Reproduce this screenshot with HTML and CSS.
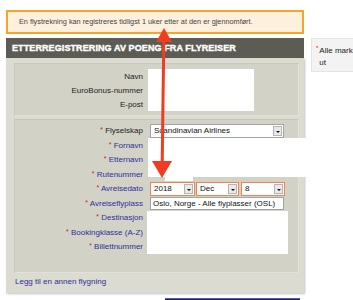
FILE: index.html
```html
<!DOCTYPE html>
<html lang="no">
<head>
<meta charset="utf-8">
<title>Etterregistrering</title>
<link rel="stylesheet" href="styles.css">
</head>
<body>
<div class="page">
  <div class="main">
    <div class="notice">En flystrekning kan registreres tidligst 1 uker etter at den er gjennomført.</div>
    <div class="header">ETTERREGISTRERING AV POENG FRA FLYREISER</div>
    <div class="panel">
      <div class="section sec1">
        <div class="labels">
          <div class="lbl">Navn</div>
          <div class="lbl">EuroBonus-nummer</div>
          <div class="lbl">E-post</div>
        </div>
        <div class="whitebox wb1"></div>
      </div>
      <div class="section sec2">
        <div class="lbl r1 dark"><span class="req">*</span> Flyselskap</div>
        <div class="lbl r2"><span class="req">*</span> Fornavn</div>
        <div class="lbl r3"><span class="req">*</span> Etternavn</div>
        <div class="lbl r4"><span class="req">*</span> Rutenummer</div>
        <div class="lbl r5"><span class="req">*</span> Avreisedato</div>
        <div class="lbl r6"><span class="req">*</span> Avreiseflyplass</div>
        <div class="lbl r7"><span class="req">*</span> Destinasjon</div>
        <div class="lbl r8"><span class="req">*</span> Bookingklasse (A-Z)</div>
        <div class="lbl r9"><span class="req">*</span> Billettnummer</div>

        <div class="select airline f1"><span class="val">Scandinavian Airlines</span><span class="btn"></span></div>
        <div class="whitebox wb2 f2"><span class="tab"></span></div>
        <div class="dates f5">
          <div class="select date year"><span class="val">2018</span><span class="btn"></span></div>
          <div class="select date month"><span class="val">Dec</span><span class="btn"></span></div>
          <div class="select date day"><span class="val">8</span><span class="btn"></span></div>
        </div>
        <div class="input f6">Oslo, Norge - Alle flyplasser (OSL)</div>
        <div class="whitebox wb3 f7"></div>
      </div>
      <a class="addlink" href="#">Legg til en annen flygning</a>
    </div>
    <div class="submit"></div>
  </div>
  <div class="sidebar"><span class="sreq">*</span><span class="stext">Alle markerte felt må fylles ut</span></div>
</div>
<svg class="arrow" width="353" height="300" viewBox="0 0 353 300">
  <line x1="163.8" y1="40" x2="162.2" y2="163" stroke="#f03c22" stroke-width="3"/>
  <polygon points="164,28 156,42 172,42" fill="#f03c22"/>
  <polygon points="162,178 152,161 172,161" fill="#f03c22"/>
</svg>
</body>
</html>
```
FILE: styles.css
```css
html, body {
  margin: 0;
  padding: 0;
  overflow: hidden;
  background: #fff;
  font-family: "Liberation Sans", Arial, sans-serif;
  font-size: 8px;
  color: #222;
}
.page {
  display: flex;
  align-items: flex-start;
  width: 480px;
}
.main {
  width: 298px;
  margin-left: 6px;
}
.notice {
  margin-top: 10px;
  height: 20px;
  line-height: 20px;
  border: 2px solid #f7a52a;
  background: #fdf0dc;
  padding-left: 11px;
  font-size: 7.3px;
  color: #444;
  white-space: nowrap;
}
.header {
  margin-top: 4px;
  height: 20px;
  line-height: 21px;
  background: #5d5c54;
  color: #fff;
  font-weight: bold;
  font-size: 9px;
  -webkit-text-stroke: 0.4px #fff;
  letter-spacing: 0.1px;
  padding-left: 6px;
  white-space: nowrap;
}
.panel {
  background: #dcdbd1;
  padding: 5px 5px 6px 8px;
  box-shadow: 1px 1px 2px rgba(0,0,0,0.25);
  height: 224px;
}
.section {
  background: #d3d2c7;
  border: 1px solid #c8c7bb;
  border-right-color: #e2e1d9;
  border-bottom-color: #e2e1d9;
}
.sec1 {
  display: flex;
  padding: 5px 0 4px 0;
  height: 42px;
}
.labels {
  width: 128px;
  display: flex;
  flex-direction: column;
}
.lbl {
  height: 14.5px;
  line-height: 14.5px;
  text-align: right;
  white-space: nowrap;
  color: #2e2e9e;
}
.sec1 .lbl { color: #222; height: 14px; line-height: 15px; }
.lbl.dark { color: #222; }
.req { color: #d21d1d; font-size: 7px; position: relative; top: -1px; }
.whitebox { background: #fff; }
.wb1 {
  margin-left: 5px;
  width: 106px;
  height: 42px;
}
.sec2 {
  margin-top: 3px;
  display: grid;
  grid-template-columns: 128px 1fr;
  grid-template-rows: repeat(9, 14.5px);
  column-gap: 5px;
  padding: 4px 0 17px 0;
  height: 130.5px;
}
.lbl { grid-column: 1; }
.r1 { grid-row: 1; } .r2 { grid-row: 2; } .r3 { grid-row: 3; }
.r4 { grid-row: 4; } .r5 { grid-row: 5; } .r6 { grid-row: 6; }
.r7 { grid-row: 7; } .r8 { grid-row: 8; } .r9 { grid-row: 9; }
.f1 { grid-column: 2; grid-row: 1; }
.f2 { grid-column: 2; grid-row: 2 / 5; }
.f5 { grid-column: 2; grid-row: 5; }
.f6 { grid-column: 2; grid-row: 6; }
.f7 { grid-column: 2; grid-row: 7 / 10; }
.select {
  display: flex;
  align-items: center;
  background: #fff;
  border: 1px solid #a3a3a3;
  box-sizing: border-box;
  height: 14px;
  color: #111;
}
.select .val { flex: 1; padding-left: 3px; white-space: nowrap; line-height: 12px; }
.select .btn {
  width: 9px;
  height: 10px;
  margin-right: 1px;
  background: #e9e9e9;
  border: 1px solid #b5b5b5;
  box-sizing: border-box;
  position: relative;
}
.select .btn::after {
  content: "";
  position: absolute;
  left: 2px;
  top: 3.5px;
  border-left: 2px solid transparent;
  border-right: 2px solid transparent;
  border-top: 2.5px solid #111;
}
.airline {
  margin-left: 2px;
  width: 134px;
  align-self: start;
}
.wb2 {
  align-self: start;
  width: 210px;
  height: 39px;
  margin-top: -1px;
  position: relative;
}
.wb2 .tab {
  position: absolute;
  left: 17px;
  top: 39px;
  width: 28px;
  height: 4px;
  background: #fff;
}
.dates {
  display: flex;
  align-items: start;
  margin-left: 2px;
  gap: 1px;
}
.date { border-color: #f0834d; }
.year { width: 45px; }
.month { width: 43px; }
.day { width: 44px; margin-left: 1px; }
.input {
  margin-left: 2px;
  width: 134px;
  height: 13.5px;
  box-sizing: border-box;
  background: #fff;
  border: 1px solid #a3a3a3;
  padding-left: 2px;
  line-height: 11.5px;
  white-space: nowrap;
  color: #111;
  align-self: start;
}
.wb3 {
  align-self: start;
  width: 141px;
  margin-left: -1px;
  height: 43px;
}
.addlink {
  display: block;
  margin-top: 3px;
  margin-left: 1px;
  color: #2e2e9e;
  text-decoration: none;
  line-height: 11px;
}
.submit {
  margin-top: 5px;
  margin-left: 159px;
  width: 135px;
  height: 20px;
  background: #20206e;
  border-top: 1px solid #5a5aa8;
}
.sidebar {
  margin-left: 7px;
  margin-top: 38px;
  width: 100px;
  height: 24px;
  padding: 6px 4px 2px 4px;
  background: #f3f3f3;
  border: 1px solid #e4e4e4;
  line-height: 12px;
  color: #222;
  display: flex;
  align-items: flex-start;
}
.sreq {
  color: #d21d1d;
  font-size: 6px;
  line-height: 6px;
  margin-right: 1px;
  flex: none;
}
.stext { flex: 1; }
.arrow {
  position: absolute;
  left: 0;
  top: 0;
  pointer-events: none;
}
```
